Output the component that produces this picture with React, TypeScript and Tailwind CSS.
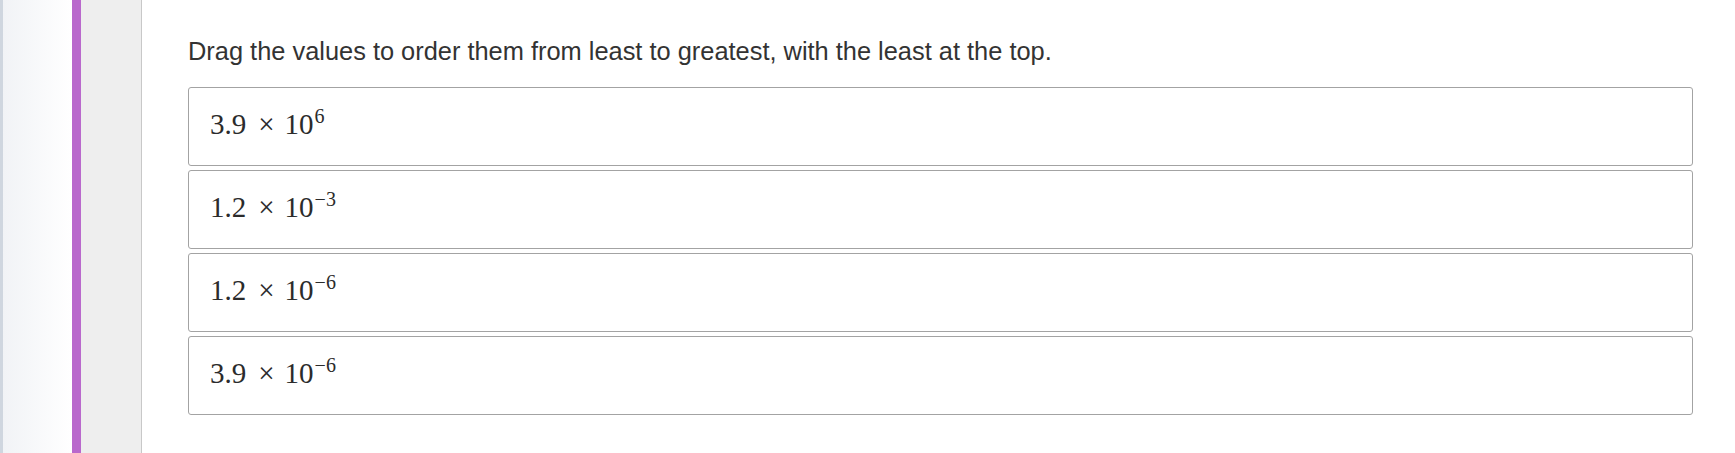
const items = [
  { base: "3.9", exp: "6" },
  { base: "1.2", exp: "−3" },
  { base: "1.2", exp: "−6" },
  { base: "3.9", exp: "−6" },
];

function SciNumber({ base, exp }: { base: string; exp: string }) {
  return (
    <span className="whitespace-nowrap font-['Liberation_Serif',serif] text-[29px] leading-[33px] text-[#2b2b2b]">
      <span>{base}</span>
      <span className="ml-[12px] mr-[10px]">×</span>
      <span>10</span>
      <span className="relative -top-[11px] ml-[1px] text-[20px]">{exp}</span>
    </span>
  );
}

export default function App() {
  return (
    <div className="flex h-[453px] w-[1735px] overflow-hidden bg-white">
      {/* left chrome */}
      <div className="w-[72px] border-l-[3px] border-[#cfd6df] bg-gradient-to-r from-[#f1f3f6] to-white" />
      <div className="w-[9px] bg-[#b968cc]" />
      <div className="w-[61px] border-r border-[#c8c8c8] bg-[#eeeeee]" />

      {/* question */}
      <div className="flex-1 pl-[46px] pr-[42px] pt-[36.5px]">
        <p className="font-['Liberation_Sans',Arial,sans-serif] text-[25.4px] leading-[29px] text-[#333333]">
          Drag the values to order them from least to greatest, with the least at the top.
        </p>
        <div className="mt-[21px] flex flex-col gap-[4px]">
          {items.map((it, i) => (
            <div
              key={i}
              className="flex h-[79px] items-center rounded-[3px] border-[1.5px] border-[#a3a3a3] bg-white pl-[21px]"
            >
              <SciNumber base={it.base} exp={it.exp} />
            </div>
          ))}
        </div>
      </div>
    </div>
  );
}
